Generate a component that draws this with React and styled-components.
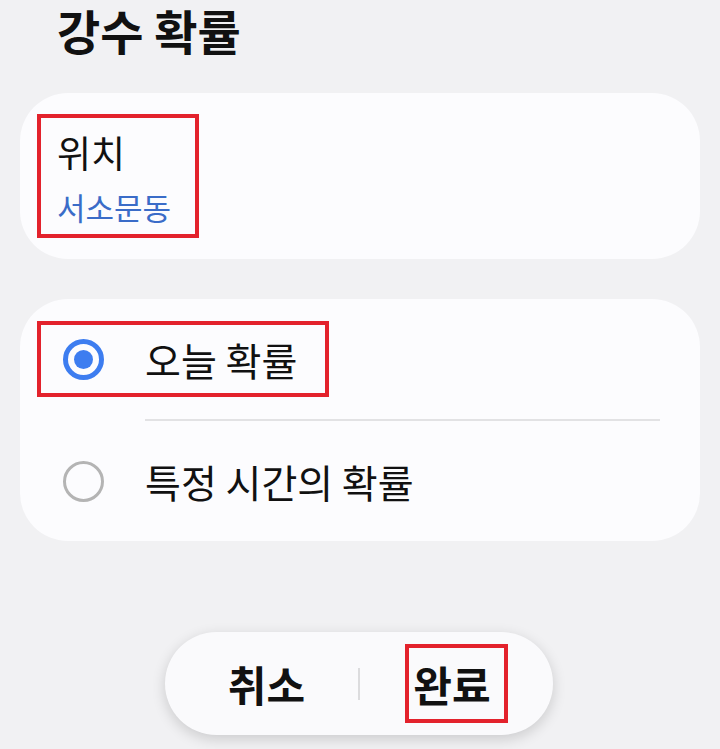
import React from "react";
import styled, { createGlobalStyle } from "styled-components";

const GlobalStyle = createGlobalStyle`
  html, body {
    margin: 0;
    padding: 0;
    background: #f1f1f3;
  }
  body {
    font-family: "Noto Sans CJK KR", "Noto Sans", sans-serif;
    color: #111;
  }
`;

const Page = styled.div`
  width: 720px;
  min-height: 749px;
  display: flex;
  flex-direction: column;
  overflow: hidden;
`;

const Title = styled.h1`
  margin: 0;
  padding: 2px 0 0 57px;
  font-size: 47px;
  line-height: 1.2;
  font-weight: 700;
`;

const Card = styled.section`
  margin: ${({ $top }) => $top}px 20px 0;
  background: #fcfcfe;
  border-radius: 48px;
  padding: ${({ $pad }) => $pad};
  display: flex;
  flex-direction: column;
`;

const Marked = styled.div`
  border: 4px solid ${({ $on }) => ($on ? "#e3222c" : "transparent")};
  box-sizing: border-box;
`;

const LocationBox = styled(Marked)`
  width: 162px;
  height: 124px;
  padding: 16px 14px 0 16px;
  display: flex;
  flex-direction: column;
  gap: 20px;
`;

const Label = styled.div`
  font-size: 37px;
  line-height: 1;
`;

const Value = styled.div`
  font-size: 31px;
  line-height: 1;
  color: #3a6cc8;
  white-space: nowrap;
`;

const Row = styled.div`
  height: 120px;
  display: flex;
  align-items: center;
`;

const Option = styled(Marked)`
  height: 76px;
  padding: 0 28px 0 22px;
  display: flex;
  align-items: center;
  gap: 41px;
`;

const Radio = styled.span`
  width: 41px;
  height: 41px;
  box-sizing: border-box;
  border-radius: 50%;
  border: ${({ $checked }) => ($checked ? "5px solid #3d7df0" : "3.5px solid #b4b4b4")};
  display: flex;
  align-items: center;
  justify-content: center;
  flex-shrink: 0;

  &::after {
    content: "";
    width: 19px;
    height: 19px;
    border-radius: 50%;
    background: ${({ $checked }) => ($checked ? "#3d7df0" : "transparent")};
  }
`;

const OptionText = styled.span`
  font-size: 39px;
  line-height: 1;
  white-space: nowrap;
`;

const Divider = styled.hr`
  margin: 0 40px 0 108px;
  border: 0;
  border-top: 2px solid #e2e2e4;
`;

const ActionBar = styled.div`
  margin: 91px 0 14px 165px;
  width: 388px;
  height: 103px;
  border-radius: 52px;
  background: #fafafc;
  box-shadow: 0 4px 14px rgba(0, 0, 0, 0.16);
  display: grid;
  grid-template-columns: 1fr auto 1fr;
  align-items: center;
`;

const ActionButton = styled(Marked)`
  justify-self: center;
  font-size: 42px;
  font-weight: 700;
  line-height: 1;
  white-space: nowrap;
  padding: ${({ $on }) => ($on ? "15px 13px 14px 4px" : "0")};
  margin-left: ${({ $shift }) => $shift}px;
`;

const BarDivider = styled.span`
  width: 2px;
  height: 32px;
  background: #dcdcde;
`;

const options = [
  { label: "오늘 확률", checked: true },
  { label: "특정 시간의 확률", checked: false },
];

export default function App() {
  return (
    <Page>
      <GlobalStyle />
      <Title>강수 확률</Title>

      <Card $top={35} $pad="21px 17px">
        <LocationBox $on>
          <Label>위치</Label>
          <Value>서소문동</Value>
        </LocationBox>
      </Card>

      <Card $top={40} $pad="0 0 0 17px">
        {options.map((opt, i) => (
          <React.Fragment key={opt.label}>
            {i > 0 && <Divider />}
            <Row>
              <Option $on={opt.checked}>
                <Radio $checked={opt.checked} />
                <OptionText>{opt.label}</OptionText>
              </Option>
            </Row>
          </React.Fragment>
        ))}
      </Card>

      <ActionBar>
        <ActionButton $shift={10}>취소</ActionButton>
        <BarDivider />
        <ActionButton $on $shift={0}>완료</ActionButton>
      </ActionBar>
    </Page>
  );
}
